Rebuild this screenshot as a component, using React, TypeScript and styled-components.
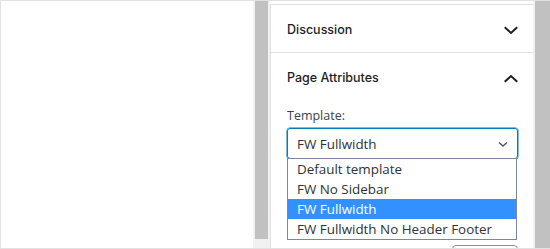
import React, { useState } from "react";
import styled, { createGlobalStyle } from "styled-components";

const GlobalStyle = createGlobalStyle`
  html, body {
    margin: 0;
    padding: 0;
    background: #fff;
  }
  body {
    font-family: "Open Sans", "Noto Sans", sans-serif;
    color: #1e1e1e;
  }
`;

const templates = [
  "Default template",
  "FW No Sidebar",
  "FW Fullwidth",
  "FW Fullwidth No Header Footer",
];

// toggle chevron of a sidebar panel
function Chevron({ up }: { up?: boolean }) {
  return (
    <svg width="24" height="24" viewBox="0 0 24 24" fill="none">
      <path
        d={up ? "M6.5 15L12 10l5.5 5" : "M6.5 10l5.5 5 5.5-5"}
        stroke="#1e1e1e"
        strokeWidth="2"
        strokeLinecap="square"
      />
    </svg>
  );
}

export default function App() {
  const [value] = useState("FW Fullwidth");
  return (
    <>
      <GlobalStyle />
      <Frame>
        <Canvas />
        <Scrollbar>
          <Thumb />
        </Scrollbar>
        <Sidebar>
          <Section>
            <PanelHeader>
              <Title>Discussion</Title>
              <Chevron />
            </PanelHeader>
          </Section>
          <Section open>
            <PanelHeader>
              <Title>Page Attributes</Title>
              <Chevron up />
            </PanelHeader>
            <PanelBody>
              <Label>Template:</Label>
              <SelectWrap>
                <Select>
                  <span>{value}</span>
                  <svg width="12" height="12" viewBox="0 0 12 12" fill="none">
                    <path d="M2 4.5l4 3.5 4-3.5" stroke="#50575e" strokeWidth="1.5" />
                  </svg>
                </Select>
                <Options>
                  {templates.map((t) => (
                    <Option key={t} selected={t === value}>
                      {t}
                    </Option>
                  ))}
                </Options>
              </SelectWrap>
              <ButtonRow>
                <GhostButton />
              </ButtonRow>
            </PanelBody>
          </Section>
        </Sidebar>
        <Scrollbar right>
          <Thumb right />
        </Scrollbar>
      </Frame>
    </>
  );
}

const Frame = styled.div`
  display: flex;
  width: 550px;
  height: 249px;
  box-sizing: border-box;
  border: 1px solid #e2e2e2;
  border-right: none;
  overflow: hidden;
`;

const Canvas = styled.div`
  width: 252px;
  background: #fff;
`;

const Scrollbar = styled.div<{ right?: boolean }>`
  width: 17px;
  flex-shrink: 0;
  background: #f1f1f1;
  display: flex;
  padding: ${(p) => (p.right ? "0 0 0 2px" : "0 2px 9px")};
  box-sizing: border-box;
`;

const Thumb = styled.div<{ right?: boolean }>`
  flex: 1;
  background: #c1c1c1;
  margin-bottom: ${(p) => (p.right ? "-2px" : "0")};
`;

const Sidebar = styled.div`
  width: 263px;
  flex-shrink: 0;
  box-sizing: border-box;
  padding-top: 3px;
  display: flex;
  flex-direction: column;
  background: #fff;
`;

const Section = styled.div<{ open?: boolean }>`
  border-top: 1px solid #e0e0e0;
  border-left: 1px solid #e0e0e0;
  flex: ${(p) => (p.open ? 1 : "none")};
`;

const PanelHeader = styled.div`
  height: 47px;
  box-sizing: border-box;
  display: flex;
  align-items: center;
  justify-content: space-between;
  padding: 2px 10px 0 16px;
`;

const Title = styled.span`
  font-family: Inter, "Open Sans", sans-serif;
  font-size: 12.5px;
  font-weight: 500;
  color: #1e1e1e;
`;

const PanelBody = styled.div`
  padding: 0 15px 0 16px;
`;

const Label = styled.div`
  font-size: 12.5px;
  color: #3c434a;
  line-height: 16px;
  margin: 8px 0 4px;
`;

const SelectWrap = styled.div`
  position: relative;
`;

const Select = styled.div`
  height: 31px;
  box-sizing: border-box;
  border: 1px solid #007cba;
  box-shadow: 0 0 0 0.5px #007cba;
  border-radius: 3px;
  display: flex;
  align-items: center;
  justify-content: space-between;
  padding: 0 8px 0 9px;
  font-size: 13.4px;
  color: #2c3338;
`;

const Options = styled.ul`
  position: absolute;
  top: 30px;
  left: 0;
  width: 230px;
  margin: 0;
  padding: 0;
  list-style: none;
  background: #fff;
  border: 1px solid #7b86a0;
  box-sizing: border-box;
  z-index: 2;
`;

const Option = styled.li<{ selected?: boolean }>`
  height: 20px;
  line-height: 20px;
  padding-left: 9px;
  font-size: 13.4px;
  background: ${(p) => (p.selected ? "#3390ff" : "#fff")};
  color: ${(p) => (p.selected ? "#fff" : "#2c3338")};
  white-space: nowrap;
`;

const ButtonRow = styled.div`
  display: flex;
  justify-content: flex-end;
  margin-top: 86px;
`;

const GhostButton = styled.div`
  width: 66px;
  height: 30px;
  box-sizing: border-box;
  border: 1px solid #8c8f94;
  border-radius: 4px;
`;
